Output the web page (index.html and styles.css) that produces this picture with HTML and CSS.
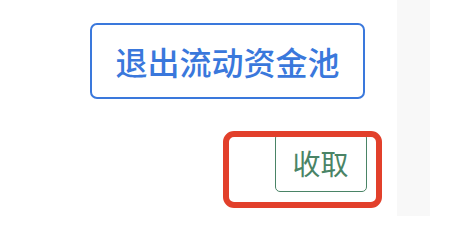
FILE: index.html
```html
<!DOCTYPE html>
<html lang="zh-CN">
<head>
<meta charset="utf-8">
<link rel="stylesheet" href="styles.css">
</head>
<body>
<div class="page">
  <main class="main">
    <button class="btn-exit">退出流动资金池</button>
    <div class="highlight">
      <button class="btn-claim">收取</button>
    </div>
  </main>
  <div class="strip"></div>
  <div class="edge"></div>
</div>
</body>
</html>
```
FILE: styles.css
```css
html, body {
  margin: 0;
  padding: 0;
  background: #ffffff;
}
.page {
  display: flex;
  width: 462px;
  height: 216px;
  overflow: hidden;
  font-family: "Noto Sans CJK SC", "Noto Sans", sans-serif;
}
.main {
  width: 397px;
  display: flex;
  flex-direction: column;
  align-items: flex-end;
  padding-right: 32px;
  padding-top: 23px;
  box-sizing: border-box;
}
.strip {
  width: 33px;
  background: #f8f8f8;
}
.edge {
  flex: 1;
  background: #ffffff;
}
.btn-exit {
  width: 275px;
  height: 76px;
  border: 2px solid #3a78dc;
  border-radius: 7px;
  background: #ffffff;
  color: #3a78dc;
  font-family: inherit;
  font-size: 32px;
  font-weight: 500;
  padding: 0;
  line-height: 1;
  display: flex;
  align-items: center;
  justify-content: center;
}
.highlight {
  margin-top: 32px;
  margin-right: -17px;
  width: 159px;
  height: 77px;
  box-sizing: border-box;
  border: 6.5px solid #e2402b;
  border-radius: 11px;
  overflow: hidden;
  display: flex;
  justify-content: flex-end;
  align-items: flex-start;
}
.btn-claim {
  margin-top: -4px;
  margin-right: 9.5px;
  width: 92px;
  height: 59px;
  box-sizing: border-box;
  border: 1.5px solid #4a8466;
  border-radius: 5px;
  background: #ffffff;
  color: #4a8466;
  font-family: inherit;
  font-size: 28px;
  font-weight: 400;
  padding: 0;
  line-height: 1;
  display: flex;
  align-items: center;
  justify-content: center;
}
```
